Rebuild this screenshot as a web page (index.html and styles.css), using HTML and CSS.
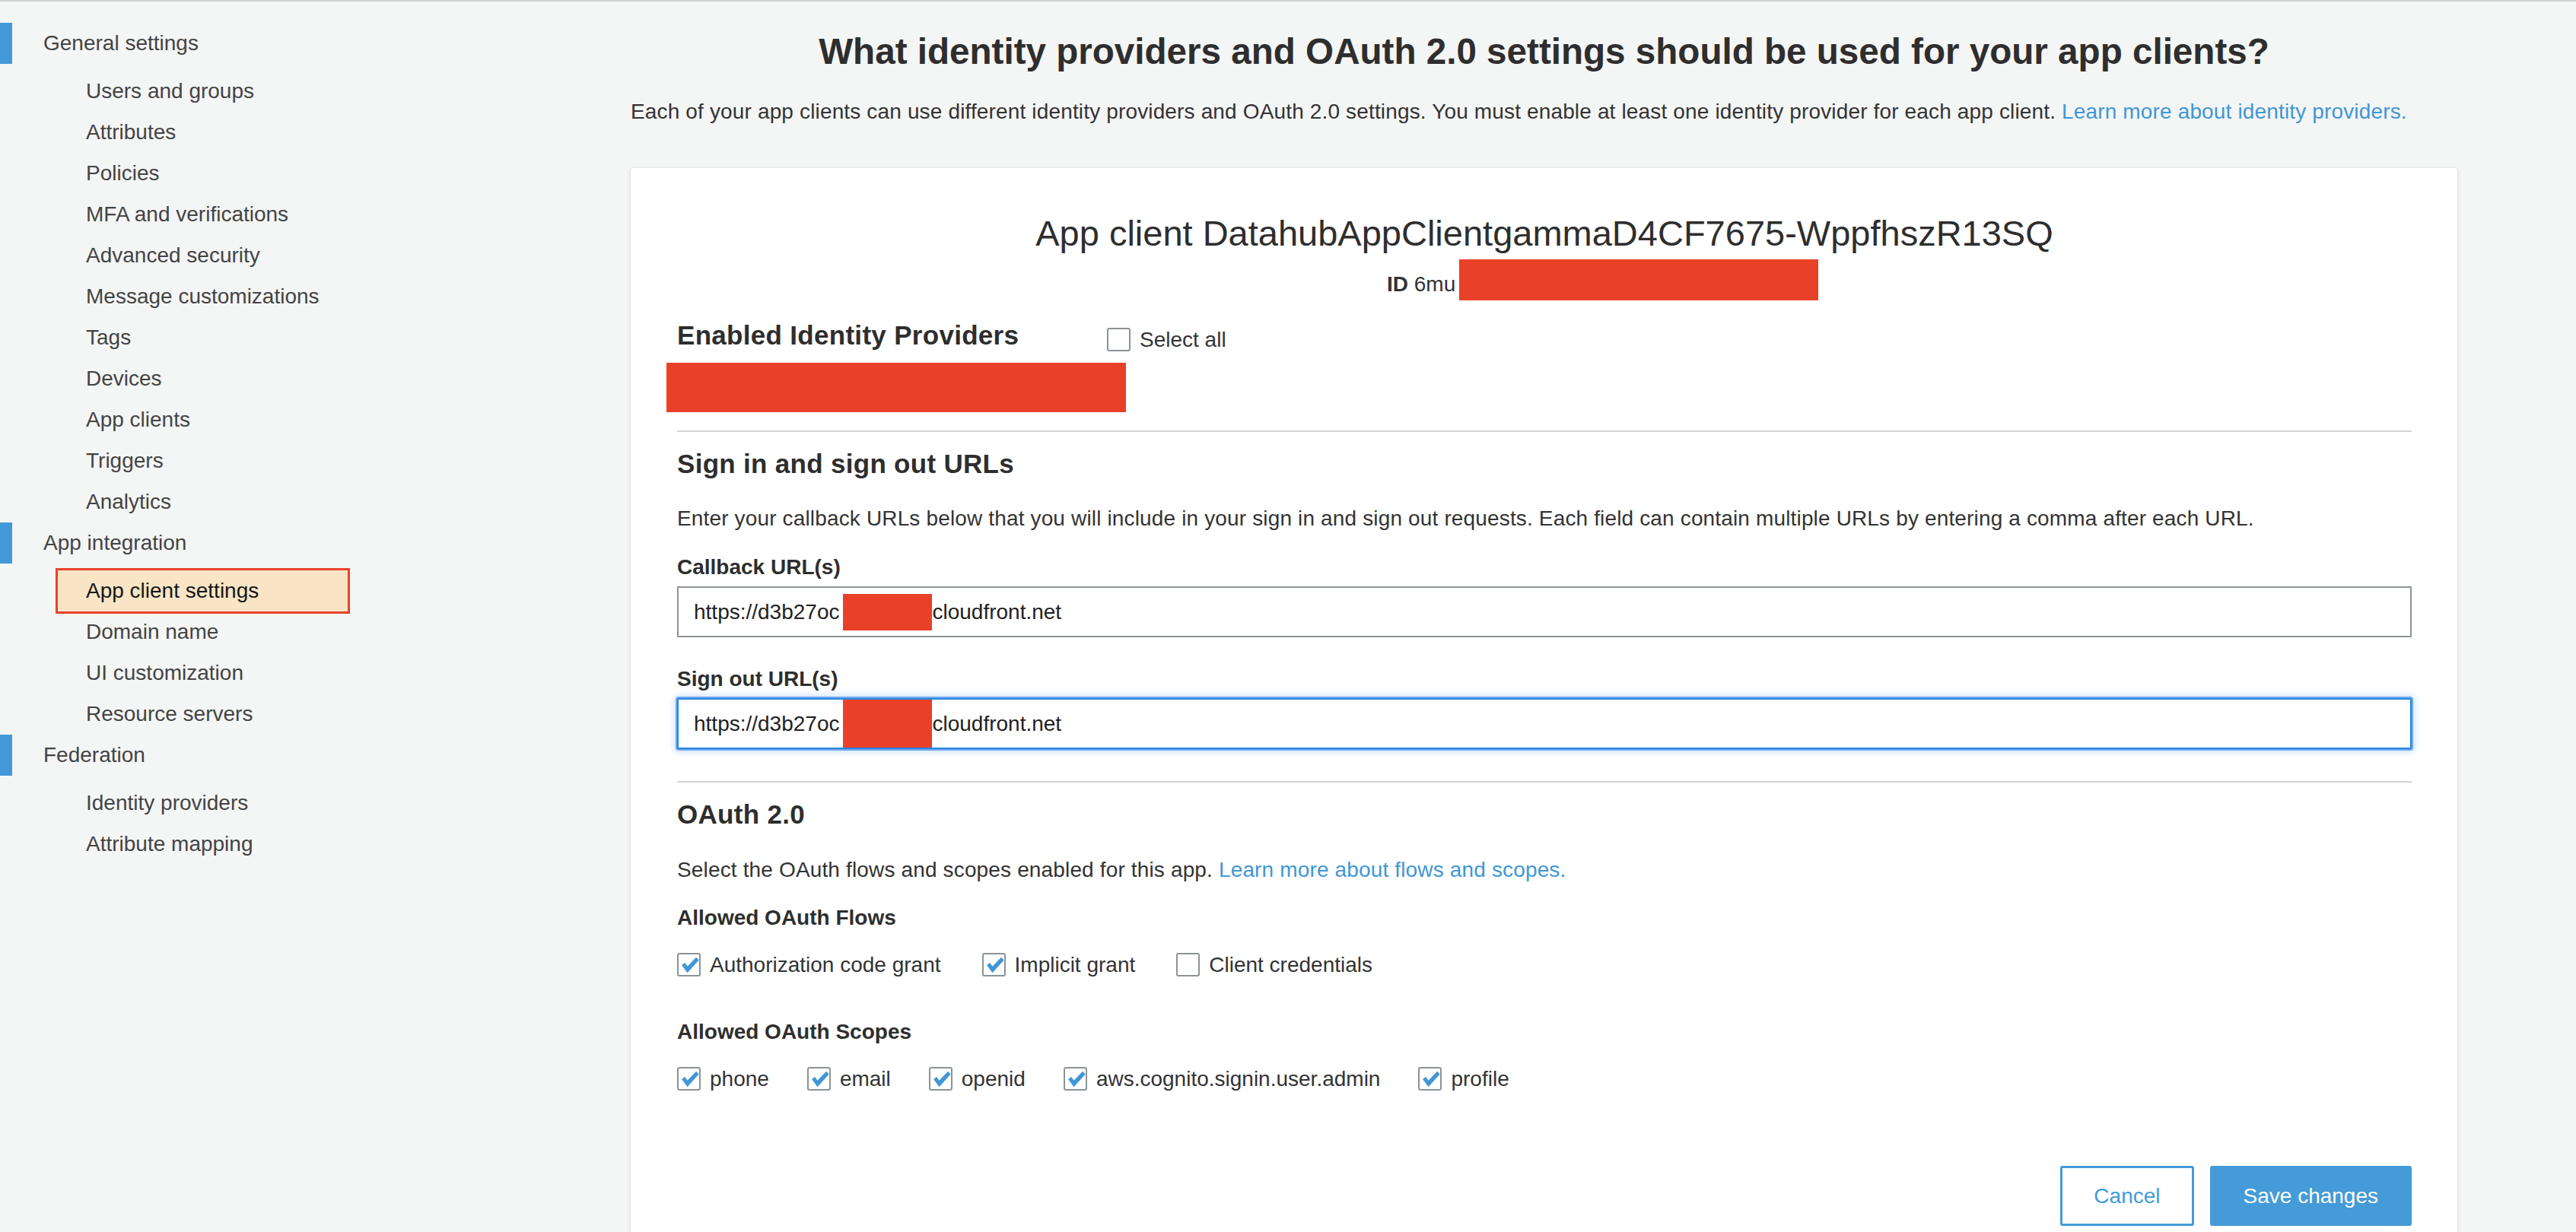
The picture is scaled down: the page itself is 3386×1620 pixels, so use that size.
FILE: index.html
```html
<!DOCTYPE html>
<html lang="en">
<head>
<meta charset="utf-8">
<title>App client settings</title>
<link rel="stylesheet" href="styles.css">
</head>
<body>
<div class="page">
  <nav class="sidebar">
    <div class="nav-group">
      <div class="nav-header">General settings</div>
      <ul class="nav-list">
        <li class="nav-item">Users and groups</li>
        <li class="nav-item">Attributes</li>
        <li class="nav-item">Policies</li>
        <li class="nav-item">MFA and verifications</li>
        <li class="nav-item">Advanced security</li>
        <li class="nav-item">Message customizations</li>
        <li class="nav-item">Tags</li>
        <li class="nav-item">Devices</li>
        <li class="nav-item">App clients</li>
        <li class="nav-item">Triggers</li>
        <li class="nav-item">Analytics</li>
      </ul>
    </div>
    <div class="nav-group">
      <div class="nav-header">App integration</div>
      <ul class="nav-list">
        <li class="nav-item nav-item-active">App client settings</li>
        <li class="nav-item">Domain name</li>
        <li class="nav-item">UI customization</li>
        <li class="nav-item">Resource servers</li>
      </ul>
    </div>
    <div class="nav-group">
      <div class="nav-header">Federation</div>
      <ul class="nav-list">
        <li class="nav-item">Identity providers</li>
        <li class="nav-item">Attribute mapping</li>
      </ul>
    </div>
  </nav>

  <main class="main">
    <h1 class="page-title">What identity providers and OAuth 2.0 settings should be used for your app clients?</h1>
    <p class="page-intro">Each of your app clients can use different identity providers and OAuth 2.0 settings. You must enable at least one identity provider for each app client. <a class="link" href="#">Learn more about identity providers.</a></p>

    <section class="card">
      <h2 class="client-title">App client DatahubAppClientgammaD4CF7675-WppfhszR13SQ</h2>
      <div class="client-id">
        <span class="id-text"><b>ID</b> 6mu</span>
        <span class="redact redact-id"></span>
      </div>

      <div class="idp-row">
        <h3 class="section-title idp-title">Enabled Identity Providers</h3>
        <label class="check check-select-all">
          <span class="box"></span>
          <span class="check-text">Select all</span>
        </label>
      </div>
      <div class="redact redact-idp"></div>

      <hr class="divider">

      <h3 class="section-title">Sign in and sign out URLs</h3>
      <p class="desc">Enter your callback URLs below that you will include in your sign in and sign out requests. Each field can contain multiple URLs by entering a comma after each URL.</p>
      <div class="field-label">Callback URL(s)</div>
      <div class="text-input">https://d3b27oc<span class="redact redact-url"></span>cloudfront.net</div>
      <div class="field-label field-label-2">Sign out URL(s)</div>
      <div class="text-input text-input-focus">https://d3b27oc<span class="redact redact-url redact-url-tall"></span>cloudfront.net</div>

      <hr class="divider divider-2">

      <h3 class="section-title">OAuth 2.0</h3>
      <p class="desc desc-oauth">Select the OAuth flows and scopes enabled for this app. <a class="link" href="#">Learn more about flows and scopes.</a></p>

      <div class="field-label field-label-flows">Allowed OAuth Flows</div>
      <div class="check-row check-row-flows">
        <label class="check"><span class="box box-checked"><svg viewBox="0 0 30 30"><path d="M4.5 15.5 L9.2 12.2 L12.8 17.6 L25.6 4.2 L29.6 8.2 L12.8 27 Z"/></svg></span><span class="check-text">Authorization code grant</span></label>
        <label class="check"><span class="box box-checked"><svg viewBox="0 0 30 30"><path d="M4.5 15.5 L9.2 12.2 L12.8 17.6 L25.6 4.2 L29.6 8.2 L12.8 27 Z"/></svg></span><span class="check-text">Implicit grant</span></label>
        <label class="check"><span class="box"></span><span class="check-text">Client credentials</span></label>
      </div>

      <div class="field-label field-label-scopes">Allowed OAuth Scopes</div>
      <div class="check-row check-row-scopes">
        <label class="check"><span class="box box-checked"><svg viewBox="0 0 30 30"><path d="M4.5 15.5 L9.2 12.2 L12.8 17.6 L25.6 4.2 L29.6 8.2 L12.8 27 Z"/></svg></span><span class="check-text">phone</span></label>
        <label class="check"><span class="box box-checked"><svg viewBox="0 0 30 30"><path d="M4.5 15.5 L9.2 12.2 L12.8 17.6 L25.6 4.2 L29.6 8.2 L12.8 27 Z"/></svg></span><span class="check-text">email</span></label>
        <label class="check"><span class="box box-checked"><svg viewBox="0 0 30 30"><path d="M4.5 15.5 L9.2 12.2 L12.8 17.6 L25.6 4.2 L29.6 8.2 L12.8 27 Z"/></svg></span><span class="check-text">openid</span></label>
        <label class="check"><span class="box box-checked"><svg viewBox="0 0 30 30"><path d="M4.5 15.5 L9.2 12.2 L12.8 17.6 L25.6 4.2 L29.6 8.2 L12.8 27 Z"/></svg></span><span class="check-text">aws.cognito.signin.user.admin</span></label>
        <label class="check"><span class="box box-checked"><svg viewBox="0 0 30 30"><path d="M4.5 15.5 L9.2 12.2 L12.8 17.6 L25.6 4.2 L29.6 8.2 L12.8 27 Z"/></svg></span><span class="check-text">profile</span></label>
      </div>

      <div class="actions">
        <button class="btn btn-secondary" type="button">Cancel</button>
        <button class="btn btn-primary" type="button">Save changes</button>
      </div>
    </section>
  </main>
</div>
</body>
</html>
```

FILE: styles.css
```css
html, body {
  margin: 0;
  padding: 0;
}

body {
  background: #f4f5f5;
  border-top: 2px solid #cfd1d1;
  font-family: "Liberation Sans", Arial, Helvetica, sans-serif;
  color: #333;
  overflow: hidden;
}

.page {
  display: flex;
  align-items: flex-start;
}

/* ---------- Sidebar ---------- */
.sidebar {
  width: 500px;
  flex: none;
  padding-top: 28px;
}

.nav-header {
  font-size: 28px;
  line-height: 54px;
  color: #444;
  border-left: 16px solid #4399d8;
  padding-left: 41px;
  margin-bottom: 9px;
}

.nav-list {
  list-style: none;
  margin: 0;
  padding: 0;
}

.nav-item {
  font-size: 28px;
  line-height: 54px;
  color: #444;
  padding-left: 113px;
}

.nav-item-active {
  margin-left: 76px;
  width: 381px;
  box-sizing: border-box;
  padding-left: 37px;
  background: #f9e5c5;
  outline: 3px solid #e8432c;
  color: #161616;
}

/* ---------- Main ---------- */
.main {
  flex: 1;
  padding: 38px 156px 0 329px;
  min-width: 0;
}

.page-title {
  margin: 0;
  font-size: 47.6px;
  line-height: 56px;
  font-weight: bold;
  text-align: center;
  color: #2e2e2e;
}

.page-intro {
  margin: 31px 0 0;
  font-size: 28px;
  line-height: 40px;
  letter-spacing: 0.15px;
  white-space: nowrap;
}

.link {
  color: #3f97d7;
  text-decoration: none;
}

.card {
  margin-top: 54px;
  background: #fff;
  border-radius: 3px;
  box-shadow: 0 1px 4px rgba(0, 0, 0, 0.14), 0 0 1px rgba(0, 0, 0, 0.12);
  padding: 58px 60px 60px 61px;
}

.client-title {
  margin: 0;
  font-size: 47px;
  line-height: 56px;
  font-weight: normal;
  text-align: center;
  color: #2e2e2e;
}

.client-id {
  display: flex;
  align-items: flex-start;
  margin-top: 6px;
  padding-left: 933px;
}

.id-text {
  font-size: 28px;
  line-height: 40px;
  margin-top: 13px;
  width: 95px;
  white-space: nowrap;
  overflow: hidden;
}

.redact {
  display: block;
  background: #e94128;
}

.redact-id {
  width: 472px;
  height: 54px;
}

.idp-row {
  display: flex;
  align-items: flex-start;
  margin-top: 25px;
}

.section-title {
  margin: 21px 0 0;
  font-size: 35px;
  line-height: 42px;
  font-weight: bold;
  letter-spacing: 0.3px;
  color: #2e2e2e;
}

.idp-title {
  margin: 0;
  width: 565px;
  flex: none;
}

.check {
  display: flex;
  align-items: center;
  gap: 12px;
  font-size: 28px;
  line-height: 30px;
  white-space: nowrap;
}

.check-select-all {
  margin-top: 11px;
}

.box {
  width: 31px;
  height: 31px;
  box-sizing: border-box;
  border: 2px solid #8d9297;
  border-radius: 3px;
  flex: none;
  display: flex;
  align-items: center;
  justify-content: center;
  background: #fff;
}

.box svg {
  width: 29px;
  height: 29px;
  display: block;
}

.box svg path {
  fill: #3f97d7;
}

.redact-idp {
  margin-top: 15px;
  margin-left: -14px;
  width: 604px;
  height: 65px;
}

.divider {
  border: none;
  height: 2px;
  background: #d3d3d3;
  margin: 24px 0 0;
}

.divider-2 {
  margin-top: 42px;
}

.desc {
  margin: 31px 0 0;
  font-size: 28px;
  line-height: 40px;
  letter-spacing: 0.15px;
  white-space: nowrap;
}

.desc-oauth {
  margin-top: 32px;
}

.field-label {
  margin-top: 24px;
  font-size: 28px;
  line-height: 40px;
  font-weight: bold;
  color: #2e2e2e;
}

.field-label-2 {
  margin-top: 35px;
}

.field-label-flows {
  margin-top: 23px;
}

.field-label-scopes {
  margin-top: 53px;
}

.text-input {
  margin-top: 5px;
  height: 67px;
  box-sizing: border-box;
  border: 2px solid #8f9498;
  padding: 0 20px;
  display: flex;
  align-items: center;
  font-size: 28px;
  line-height: 40px;
  color: #222;
  white-space: nowrap;
  background: #fff;
}

.text-input-focus {
  border-color: #2a85dd;
  border-radius: 2px;
  box-shadow: 0 0 0 2px #6ea8f1, 0 0 8px 4px rgba(110, 168, 241, 0.35);
}

.redact-url {
  width: 117px;
  height: 48px;
  margin-left: 5px;
  flex: none;
}

.redact-url-tall {
  height: 63px;
}

.check-row {
  display: flex;
  align-items: center;
  margin-top: 26px;
}

.check-row-flows {
  gap: 54px;
}

.check-row-scopes {
  gap: 50px;
}

.actions {
  display: flex;
  justify-content: flex-end;
  gap: 21px;
  margin-top: 99px;
}

.btn {
  height: 79px;
  padding: 0 41px;
  border: 3px solid #449bd8;
  border-radius: 3px;
  font-family: "Liberation Sans", Arial, Helvetica, sans-serif;
  font-size: 28px;
  cursor: pointer;
}

.btn-secondary {
  background: #fff;
  color: #449bd8;
}

.btn-primary {
  background: #449bd8;
  color: #fff;
}
```
